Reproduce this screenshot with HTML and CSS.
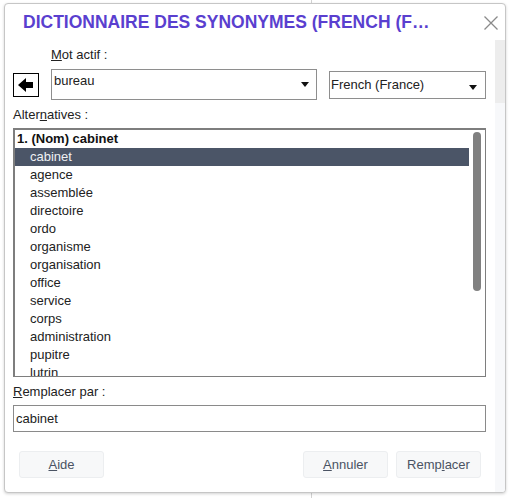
FILE: index.html
```html
<!DOCTYPE html>
<html lang="fr">
<head>
<meta charset="utf-8">
<title>Dictionnaire des synonymes</title>
<link rel="stylesheet" href="styles.css">
</head>
<body>
<div class="dialog">
  <div class="titlebar">
    <div class="title">DICTIONNAIRE DES SYNONYMES (FRENCH (F…</div>
    <svg class="close" width="14" height="14" viewBox="0 0 14 14"><path d="M0.5 0.5 L13.5 13.5 M13.5 0.5 L0.5 13.5" stroke="#8a8a8a" stroke-width="1.3" fill="none"/></svg>
  </div>
  <div class="body">
    <div class="content">
      <div class="label indent"><u>M</u>ot actif :</div>
      <div class="wordrow">
        <div class="backbtn">
          <svg width="15" height="14" viewBox="0 0 15 14"><polygon points="0,7 8,0 8,4 15,4 15,10 8,10 8,14" fill="#000"/></svg>
        </div>
        <div class="combo word">
          <span class="combotext">bureau</span>
          <svg class="tri" width="8" height="5" viewBox="0 0 8 5"><polygon points="0,0 8,0 4,5" fill="#111"/></svg>
        </div>
        <div class="combo lang">
          <span class="combotext">French (France)</span>
          <svg class="tri" width="8" height="5" viewBox="0 0 8 5"><polygon points="0,0 8,0 4,5" fill="#111"/></svg>
        </div>
      </div>
      <div class="label gap7">Alter<u>n</u>atives :</div>
      <div class="list">
        <div class="rows">
          <div class="row head">1. (Nom) cabinet</div>
          <div class="row item sel">cabinet</div>
          <div class="row item">agence</div>
          <div class="row item">assemblée</div>
          <div class="row item">directoire</div>
          <div class="row item">ordo</div>
          <div class="row item">organisme</div>
          <div class="row item">organisation</div>
          <div class="row item">office</div>
          <div class="row item">service</div>
          <div class="row item">corps</div>
          <div class="row item">administration</div>
          <div class="row item">pupitre</div>
          <div class="row item">lutrin</div>
        </div>
        <div class="scroll"><div class="thumb"></div></div>
      </div>
      <div class="label gap7"><u>R</u>emplacer par :</div>
      <div class="input">cabinet</div>
      <div class="buttons">
        <div class="btn aide"><u>A</u>ide</div>
        <div class="spacer"></div>
        <div class="btn"><u>A</u>nnuler</div>
        <div class="btn">Remp<u>l</u>acer</div>
      </div>
    </div>
    <div class="strip"></div>
  </div>
</div>
</body>
</html>
```
FILE: styles.css
```css
* { box-sizing: border-box; }
html, body { margin: 0; padding: 0; }
body {
  width: 514px;
  height: 498px;
  overflow: hidden;
  font-family: "Liberation Sans", Arial, sans-serif;
  font-size: 13px;
  color: #222;
  background: linear-gradient(to right, #fff 0, #fff 311px, #d2d2d2 311px, #d2d2d2 312px, #fff 312px);
  padding-top: 3px;
  padding-left: 4px;
}
.dialog {
  width: 502px;
  height: 490px;
  border: 1px solid #c6c6c6;
  border-radius: 4px;
  background: #fff;
  box-shadow: 0 1px 3px rgba(0,0,0,0.18);
  display: flex;
  flex-direction: column;
  overflow: hidden;
}
.titlebar {
  height: 36px;
  display: flex;
  align-items: center;
  padding-left: 18px;
  padding-right: 7px;
}
.title {
  flex: 1;
  font-size: 17.5px;
  font-weight: bold;
  color: #5a3fcf;
  white-space: nowrap;
}
.close { display: block; margin-top: 1px; }
.body {
  flex: 1;
  display: flex;
}
.content {
  width: 490px;
  padding: 0 9px 0 8px;
}
.strip {
  width: 10px;
  background: linear-gradient(#ededed 0, #ededed 63px, #f7f8fa 63px);
}
.label {
  line-height: 16px;
  height: 16px;
  white-space: nowrap;
}
.indent { margin-left: 38px; margin-top: 7px; }
.gap7 { margin-top: 7px; }
.wordrow {
  margin-top: 6px;
  height: 31px;
  display: flex;
  align-items: center;
}
.backbtn {
  width: 26px;
  height: 24px;
  border: 1px solid #000;
  background: #fff;
  display: flex;
  align-items: center;
  justify-content: center;
}
.backbtn svg { display: block; margin-left: -1px; }
.combo {
  border: 1px solid #8e8e8e;
  background: #fff;
  display: flex;
  line-height: 16px;
}
.combotext { flex: 1; white-space: nowrap; }
.tri { display: block; }
.word {
  margin-left: 12px;
  width: 266px;
  height: 31px;
  padding: 3px 7px 0 2px;
  align-items: flex-start;
}
.word .tri { align-self: center; margin-bottom: 3px; }
.lang {
  margin-left: 12px;
  width: 157px;
  height: 28px;
  padding: 0 8px 0 1px;
  align-items: center;
}
.lang .tri { margin-top: 5px; }
.list {
  margin-top: 5px;
  height: 249px;
  border-style: solid;
  border-color: #7e7e7e;
  border-width: 2px 1px 1px 2px;
  display: flex;
  overflow: hidden;
}
.rows {
  flex: 1;
  overflow: hidden;
}
.row {
  height: 18px;
  line-height: 18px;
  white-space: nowrap;
}
.head { font-weight: bold; padding-left: 2px; color: #111; }
.item { padding-left: 15px; }
.sel { background: #4b5567; color: #eef0f3; }
.scroll {
  width: 16px;
  padding: 2px 4px;
}
.thumb {
  width: 8px;
  height: 159px;
  border-radius: 4px;
  background: #808080;
}
.input {
  margin-top: 5px;
  height: 27px;
  border: 1px solid #8a8a8a;
  padding-left: 2px;
  line-height: 25px;
}
.buttons {
  margin-top: 19px;
  display: flex;
  padding: 0 5px 0 6px;
  gap: 8px;
}
.spacer { flex: 1; }
.btn {
  width: 85px;
  height: 27px;
  background: #f7f8f9;
  border: 1px solid #eceef0;
  border-radius: 3px;
  text-align: center;
  line-height: 25px;
  color: #4a5363;
}
```
